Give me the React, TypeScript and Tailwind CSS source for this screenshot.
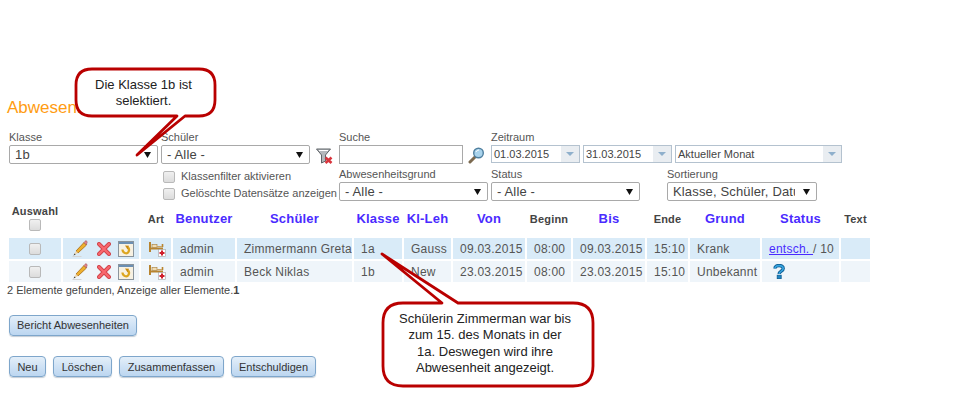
import React from "react";

const font = "font-['Liberation_Sans',Arial,sans-serif]";

function Check() {
  return (
    <span className="block h-[12px] w-[12px] shrink-0 rounded-[2px] border border-[#b9b9b9] bg-gradient-to-b from-[#f0f0f0] to-[#dcdcdc]" />
  );
}

function Select({ value, width, textWidth }: { value: string; width: string; textWidth?: string }) {
  return (
    <div className={`flex h-[19px] items-center justify-between rounded-[2px] border border-[#a9a9a9] bg-white pl-[5px] pr-[6px] text-[13px] tracking-[0.15px] text-[#444] ${width}`}>
      <span className={`overflow-hidden whitespace-nowrap ${textWidth ?? ""}`}>{value}</span>
      <svg width="7" height="6" viewBox="0 0 7 6" className="shrink-0">
        <path d="M0 0h7L3.5 6z" fill="#111" />
      </svg>
    </div>
  );
}

function Combo({ value, width }: { value: string; width: string }) {
  return (
    <div className={`flex h-[18px] items-stretch border border-[#b4c2cf] bg-white ${width}`}>
      <span className="flex-1 overflow-hidden whitespace-nowrap pl-[2px] text-[11px] leading-[17px] text-[#444]">{value}</span>
      <span className="flex w-[18px] items-center justify-center bg-[#e9edf1]">
        <svg width="8" height="4" viewBox="0 0 8 4">
          <path d="M0 0h8L4 4z" fill="#8fb0cc" />
        </svg>
      </span>
    </div>
  );
}

function Label({ children }: { children: React.ReactNode }) {
  return <div className="h-[15px] text-[11px] leading-[14px] text-[#555]">{children}</div>;
}

function FilterIcon() {
  return (
    <svg width="17" height="16" viewBox="0 0 17 16">
      <path d="M0.5 1h14l-5 6v6l-4 2V7z" fill="#b4b8bc" stroke="#5f6468" strokeWidth="1" />
      <path d="M3 2.5h9" stroke="#fff" strokeWidth="1" />
      <path d="M9.5 9.5l6 5.5M15.5 9.5l-6 5.5" stroke="#d8343c" strokeWidth="2.6" />
    </svg>
  );
}

function SearchIcon() {
  return (
    <svg width="17" height="17" viewBox="0 0 17 17">
      <path d="M7 10l-5 5" stroke="#7c6a50" strokeWidth="3" strokeLinecap="round" />
      <circle cx="10.5" cy="6" r="4.8" fill="#a9d3ec" stroke="#4f7f9f" strokeWidth="1.4" />
      <path d="M8 5c.6-1.3 1.6-1.9 3-2" stroke="#fff" strokeWidth="1" fill="none" />
    </svg>
  );
}

function PencilIcon() {
  return (
    <svg width="16" height="17" viewBox="0 0 16 17">
      <path d="M0.5 16.5h9" stroke="#d5d5d5" strokeWidth="1" />
      <path d="M4 11L12 2.5l2.5 2.5L6 13z" fill="#eeb02e" stroke="#a86a10" strokeWidth="0.8" />
      <path d="M12 2.5l1-1.2c.6-.6 1.3-.6 1.8 0 .5.5.5 1.2 0 1.7L14.5 5z" fill="#e8848a" stroke="#9a5a5a" strokeWidth="0.6" />
      <path d="M4 11L1.5 15.5 6 13z" fill="#efd7ae" />
      <path d="M2.6 13.4L1.5 15.5l2.1-1z" fill="#333" />
    </svg>
  );
}

function CrossIcon() {
  return (
    <svg width="14" height="14" viewBox="0 0 14 14">
      <path d="M2 2l10 10M12 2L2 12" stroke="#d0434a" strokeWidth="4" strokeLinecap="round" />
      <path d="M2 2l10 10M12 2L2 12" stroke="#f9686e" strokeWidth="2.2" strokeLinecap="round" />
    </svg>
  );
}

function WindowIcon() {
  return (
    <svg width="16" height="16" viewBox="0 0 16 16">
      <rect x="0.5" y="0.5" width="15" height="15" fill="#f7f1e2" stroke="#8a949c" />
      <rect x="1" y="1" width="14" height="2" fill="#6b8fb3" />
      <path d="M4.5 8.5c0 3.6 4.4 5 6 2.4 1-1.7.6-3.2-.4-4.4" fill="none" stroke="#dca51f" strokeWidth="2.2" />
      <path d="M7 4.6l4 .2-1.4 3.8z" fill="#c98a10" />
    </svg>
  );
}

function BedIcon() {
  return (
    <svg width="17" height="16" viewBox="0 0 17 16">
      <path d="M1 1v10M1.5 7.5h11.5V11" fill="none" stroke="#b8842f" strokeWidth="2" />
      <path d="M13.5 3v3" stroke="#b8842f" strokeWidth="1.6" />
      <rect x="3" y="3.5" width="5" height="3" fill="#f0dcb4" stroke="#a47a35" strokeWidth="0.6" />
      <path d="M8 5.5h5" stroke="#c9a468" strokeWidth="1" />
      <rect x="9.5" y="8.5" width="7" height="7" fill="#fff" stroke="#a0a0a0" strokeWidth="0.6" />
      <path d="M13 9.5v5M10.5 12h5" stroke="#cf1f2c" strokeWidth="2" />
    </svg>
  );
}

function HelpIcon() {
  return (
    <svg width="12" height="15" viewBox="0 0 12 15" className="ml-[4px] block">
      <path d="M2 4.5C2 .6 10.2.6 10.2 4.4 10.2 7.2 6.2 7 6.2 10" fill="none" stroke="#0d5c92" strokeWidth="3.4" />
      <path d="M2 4.5C2 .6 10.2.6 10.2 4.4 10.2 7.2 6.2 7 6.2 10" fill="none" stroke="#36a3de" strokeWidth="1.7" />
      <rect x="4.2" y="11.2" width="4" height="3.4" fill="#1f86c4" stroke="#0d5c92" strokeWidth="0.8" />
    </svg>
  );
}

function Button({ children, width }: { children: React.ReactNode; width: string }) {
  return (
    <button className={`h-[21px] rounded-[4px] border border-[#7ea6cb] bg-gradient-to-b from-[#e4eff9] via-[#cfe2f5] to-[#bcd6f0] text-[11px] leading-[18px] text-[#333] shadow-[0_1px_1px_#c4cdd6] ${width}`}>
      {children}
    </button>
  );
}

const widths = [52, 76, 30, 62, 115, 48, 47, 72, 44, 72, 41, 70, 77, 29];

const rows = [
  { bg: "bg-[#d9ebf8]", user: "admin", name: "Zimmermann Greta", klasse: "1a", leh: "Gauss", von: "09.03.2015", begin: "08:00", bis: "09.03.2015", ende: "15:10", grund: "Krank", open: false },
  { bg: "bg-[#eff5fa]", user: "admin", name: "Beck Niklas", klasse: "1b", leh: "New", von: "23.03.2015", begin: "08:00", bis: "23.03.2015", ende: "15:10", grund: "Unbekannt", open: true },
];

function LinkHead({ children }: { children: React.ReactNode }) {
  return <th className="p-0 pb-[9px] text-center align-bottom text-[13px] font-bold leading-[16px] tracking-[0.2px] text-[#4a2bff]">{children}</th>;
}

function PlainHead({ children }: { children: React.ReactNode }) {
  return <th className="p-0 pb-[10px] text-center align-bottom text-[11px] font-bold leading-[14px] tracking-[0.2px] text-[#444]">{children}</th>;
}

function Cell({ children, bg }: { children?: React.ReactNode; bg: string }) {
  return <td className={`h-[21px] overflow-hidden whitespace-nowrap p-0 pl-[7px] text-[12px] tracking-[0.25px] text-[#555] ${bg}`}>{children}</td>;
}

export default function App() {
  return (
    <div className={`relative h-[414px] w-[955px] overflow-hidden bg-white ${font}`}>
      <h1 className="ml-[7px] pt-[98px] text-[17px] font-normal leading-[20px] text-[#ff9c12]">Abwesenheiten</h1>

      <div className="ml-[9px] mt-[12px]">
        <div className="flex">
          <div className="mr-[3px] w-[149px]">
            <Label>Klasse</Label>
            <Select value="1b" width="w-[149px]" />
          </div>
          <div className="w-[149px]">
            <Label>Schüler</Label>
            <Select value="- Alle -" width="w-[149px]" />
          </div>
          <div className="flex w-[29px] items-end pl-[6px]">
            <FilterIcon />
          </div>
          <div className="w-[124px]">
            <Label>Suche</Label>
            <div className="h-[19px] border border-[#a9a9a9] bg-white" />
          </div>
          <div className="flex w-[28px] items-end pl-[5px]">
            <SearchIcon />
          </div>
          <div>
            <Label>Zeitraum</Label>
            <div className="flex gap-[3px]">
              <Combo value="01.03.2015" width="w-[89px]" />
              <Combo value="31.03.2015" width="w-[89px]" />
              <Combo value="Aktueller Monat" width="w-[167px]" />
            </div>
          </div>
        </div>

        <div className="mt-[3px] flex">
          <div className="ml-[154px] mr-[2px] w-[174px] pt-[1px] text-[11px] leading-[17px] text-[#555]">
            <div className="flex items-center gap-[6px]"><Check /><span>Klassenfilter aktivieren</span></div>
            <div className="flex items-center gap-[6px]"><Check /><span className="whitespace-nowrap">Gelöschte Datensätze anzeigen</span></div>
          </div>
          <div className="mr-[3px] w-[149px]">
            <Label>Abwesenheitsgrund</Label>
            <Select value="- Alle -" width="w-[149px]" />
          </div>
          <div className="mr-[27px] w-[149px]">
            <Label>Status</Label>
            <Select value="- Alle -" width="w-[149px]" />
          </div>
          <div className="w-[150px]">
            <Label>Sortierung</Label>
            <Select value="Klasse, Schüler, Datum" width="w-[150px]" textWidth="w-[122px]" />
          </div>
        </div>
      </div>

      <table className="ml-[7px] table-fixed border-separate border-spacing-[2px]" style={{ width: 865 }}>
        <colgroup>
          {widths.map((w, i) => (
            <col key={i} style={{ width: w }} />
          ))}
        </colgroup>
        <thead>
          <tr>
            <th className="p-0 text-center align-bottom">
              <div className="text-[11px] font-bold leading-[14px] tracking-[0.2px] text-[#444]">Auswahl</div>
              <div className="mb-[5px] mt-[1px] flex justify-center"><Check /></div>
            </th>
            <th />
            <PlainHead>Art</PlainHead>
            <LinkHead>Benutzer</LinkHead>
            <LinkHead>Schüler</LinkHead>
            <LinkHead>Klasse</LinkHead>
            <LinkHead>Kl-Leh</LinkHead>
            <LinkHead>Von</LinkHead>
            <PlainHead>Beginn</PlainHead>
            <LinkHead>Bis</LinkHead>
            <PlainHead>Ende</PlainHead>
            <LinkHead>Grund</LinkHead>
            <LinkHead>Status</LinkHead>
            <PlainHead>Text</PlainHead>
          </tr>
        </thead>
        <tbody>
          {rows.map((r) => (
            <tr key={r.name}>
              <td className={`h-[21px] p-0 ${r.bg}`}>
                <div className="flex justify-center"><Check /></div>
              </td>
              <td className={`h-[21px] p-0 ${r.bg}`}>
                <div className="flex items-center pl-[9px]">
                  <PencilIcon />
                  <span className="ml-[9px]"><CrossIcon /></span>
                  <span className="ml-[7px]"><WindowIcon /></span>
                </div>
              </td>
              <td className={`h-[21px] p-0 ${r.bg}`}>
                <div className="flex justify-center pl-[3px]"><BedIcon /></div>
              </td>
              <Cell bg={r.bg}>{r.user}</Cell>
              <Cell bg={r.bg}>{r.name}</Cell>
              <Cell bg={r.bg}>{r.klasse}</Cell>
              <Cell bg={r.bg}>{r.leh}</Cell>
              <Cell bg={r.bg}>{r.von}</Cell>
              <Cell bg={r.bg}>{r.begin}</Cell>
              <Cell bg={r.bg}>{r.bis}</Cell>
              <Cell bg={r.bg}>{r.ende}</Cell>
              <Cell bg={r.bg}>{r.grund}</Cell>
              <Cell bg={r.bg}>
                {r.open ? (
                  <HelpIcon />
                ) : (
                  <span>
                    <span className="text-[#4a2bff] underline">entsch. </span>/ 10
                  </span>
                )}
              </Cell>
              <Cell bg={r.bg} />
            </tr>
          ))}
        </tbody>
      </table>

      <div className="ml-[7px] mt-[-1px] text-[11px] leading-[14px] text-[#444]">
        2 Elemente gefunden, Anzeige aller Elemente.<span className="font-bold">1</span>
      </div>

      <div className="ml-[9px] mt-[15px]">
        <Button width="w-[128px]">Bericht Abwesenheiten</Button>
      </div>
      <div className="ml-[9px] mt-[20px] flex gap-[7px]">
        <Button width="w-[37px]">Neu</Button>
        <Button width="w-[59px]">Löschen</Button>
        <Button width="w-[105px]">Zusammenfassen</Button>
        <Button width="w-[85px]">Entschuldigen</Button>
      </div>

      {/* callouts lying over the page */}
      <svg width="955" height="414" className="pointer-events-none absolute left-0 top-0">
        <path
          d="M92 69H199Q215 69 215 85V100Q215 116 199 116H185L137 155L177 116H92Q76 116 76 100V85Q76 69 92 69Z"
          fill="#fff"
          stroke="#b90000"
          strokeWidth="2.8"
          strokeLinejoin="round"
        />
        <path
          d="M403 303H442L382 254L458 303H573Q593 303 593 323V366Q593 386 573 386H403Q383 386 383 366V323Q383 303 403 303Z"
          fill="#fff"
          stroke="#b90000"
          strokeWidth="2.8"
          strokeLinejoin="round"
        />
      </svg>
      <div className="absolute left-[74px] top-[77px] w-[139px] text-center text-[13px] leading-[16px] text-[#222]">
        Die Klasse 1b ist
        <br />
        selektiert.
      </div>
      <div className="absolute left-[380px] top-[311px] w-[210px] text-center text-[13px] leading-[16.4px] text-[#222]">
        Schülerin Zimmerman war bis
        <br />
        zum 15. des Monats in der
        <br />
        1a. Deswegen wird ihre
        <br />
        Abwesenheit angezeigt.
      </div>
    </div>
  );
}
